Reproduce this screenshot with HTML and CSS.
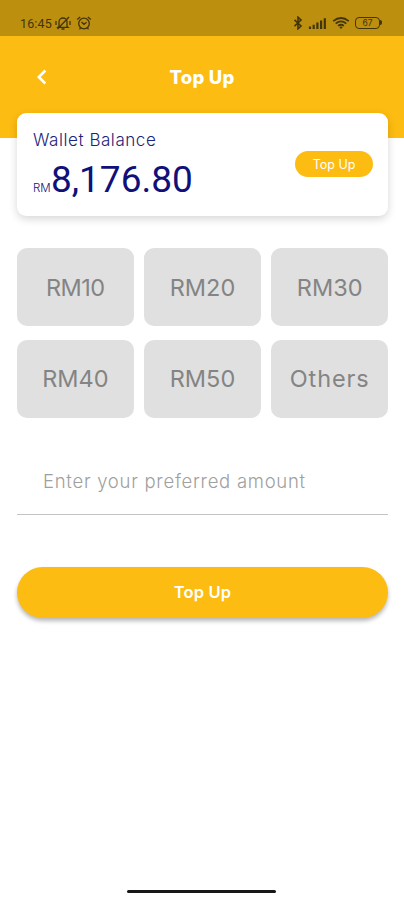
FILE: index.html
```html
<!DOCTYPE html>
<html lang="en">
<head>
<meta charset="utf-8">
<title>Top Up</title>
<link rel="stylesheet" href="styles.css">
</head>
<body>
<div class="status">
  <div class="status-left">
    <span class="time">16:45</span>
    <svg class="bell" width="16" height="16" viewBox="0 0 16 16"><path d="M4 11.500V7a4 4 0 0 1 8 0v4.500l1 .8H3zM6.500 14h3M2.500 14 14 2M1 6v4M15 6v4"/></svg>
    <svg class="alarm" width="16" height="16" viewBox="0 0 16 16"><circle cx="8" cy="8.500" r="5.300"/><path d="M1.200 4.500 4.200 2M14.800 4.500 11.800 2M5.500 7 8 9.300l2.600-2M4.500 13 3.500 14.300M11.500 13l1 1.300"/></svg>
  </div>
  <div class="status-right">
    <svg width="10" height="14" viewBox="0 0 10 14"><path class="bluetooth" d="M1.500 3.800 8 10 5 12.800V1.200L8 4 1.500 10.200"/></svg>
    <svg width="19" height="14" viewBox="0 0 19 14"><path class="bars" d="M2 10.500V13M5.700 8.800V13M9.400 6.500V13M13.100 4.500V13M16.800 2.200V13"/></svg>
    <svg width="18" height="14" viewBox="0 0 18 14"><path class="wifi" d="M1.200 5.200Q9-1.200 16.800 5.200M3.700 7.600Q9 3.200 14.300 7.600M6.100 9.900Q9 7.600 11.900 9.900"/><path class="dot" d="M7.300 11 9 13l1.700-2Q9 10 7.300 11z"/></svg>
    <div class="battery"><span class="cell">67</span><span class="tip"></span></div>
  </div>
</div>
<header class="header">
  <svg class="back" width="12" height="16" viewBox="0 0 12 16"><path d="M9.300 1.500 2.800 8l6.500 6.500"/></svg>
  <h1 class="title">Top Up</h1>
</header>
<main class="content">
  <section class="wallet">
    <div class="balance">
      <div class="label">Wallet Balance</div>
      <div class="amount"><span class="currency">RM</span><span class="value">8,176.80</span></div>
    </div>
    <button class="chip">Top Up</button>
  </section>
  <section class="options">
    <button class="option one">RM10</button>
    <button class="option">RM20</button>
    <button class="option">RM30</button>
    <button class="option">RM40</button>
    <button class="option">RM50</button>
    <button class="option others">Others</button>
  </section>
  <div class="field">Enter your preferred amount</div>
  <button class="submit">Top Up</button>
</main>
<footer class="home"><div class="home-bar"></div></footer>
</body>
</html>
```
FILE: styles.css
```css
* { box-sizing: border-box; }
body {
  margin: 0;
  height: 900px;
  display: flex;
  flex-direction: column;
  background: #fff;
  font-family: Inter, "Liberation Sans", sans-serif;
  overflow: hidden;
}
button { border: 0; padding: 0; font-family: inherit; white-space: nowrap; }
svg { display: block; fill: none; stroke: #42340b; stroke-width: 1.3; flex: none; }

.status {
  height: 36px;
  flex: none;
  padding: 10px 22px 0 20px;
  background: #bc8f0f;
  display: flex;
  justify-content: space-between;
}
.status-left, .status-right { display: flex; align-items: center; height: 26px; }
.time { font: 12.5px Roboto, sans-serif; color: #42340b; letter-spacing: .15px; width: 35px; }
.bell { margin-right: 5px; }
.status-right { gap: 5px; padding-bottom: 1px; }
.bluetooth { stroke-width: 1.6; }
.bars { stroke-width: 2.2; }
.wifi { stroke-width: 1.7; }
.dot { fill: #42340b; stroke: none; }
.battery { display: flex; align-items: center; }
.cell {
  width: 25px; height: 12px;
  border: 1.500px solid #42340b;
  border-radius: 4px;
  font: 8.5px/11px Inter, sans-serif;
  text-align: center;
  color: #42340b;
}
.tip { width: 2px; height: 5px; background: #42340b; border-radius: 0 2px 2px 0; }

.header {
  height: 102px;
  flex: none;
  background: #fdbc11;
  display: grid;
  grid-template-columns: 36px 1fr 36px;
  align-items: start;
  padding-top: 30px;
}
.back { margin: 3px 0 0 35.500px; stroke: #fff; stroke-width: 2.6; }
.title { margin: 0; text-align: center; color: #fff; font-size: 18.500px; line-height: 22px; font-weight: 800; letter-spacing: .2px; }

.content { flex: 1; padding: 0 16px 0 17px; margin-top: -25px; display: flex; flex-direction: column; }
.wallet {
  height: 103px;
  flex: none;
  border-radius: 9px;
  background: #fff;
  box-shadow: 0 3px 9px rgba(0, 0, 0, .16);
  padding: 16px 15px 0 16px;
  display: flex;
  justify-content: space-between;
}
.label { color: #1d2379; font-size: 17px; line-height: 22px; font-weight: 300; letter-spacing: .55px; white-space: nowrap; }
.amount { display: flex; align-items: baseline; color: #10107a; line-height: 44px; margin-top: 7px; }
.currency { font-size: 11.5px; font-weight: 300; width: 18px; }
.value { font-family: Roboto, sans-serif; font-size: 37px; }
.chip {
  width: 78px; height: 26px;
  margin-top: 22px;
  border-radius: 13px;
  background: #fdbc11;
  color: #fff;
  font-size: 12.5px;
}
.options {
  margin-top: 32.400px;
  display: grid;
  grid-template-columns: repeat(3, 1fr);
  grid-auto-rows: 78px;
  gap: 13.500px 10.500px;
}
.option { background: #e0e0e0; color: #848484; border-radius: 10px; font-size: 23.500px; }
.one { letter-spacing: -.5px; }
.others { letter-spacing: .9px; }
.field {
  height: 97px;
  border-bottom: 1.500px solid #c4c4c4;
  padding: 50px 0 0 26px;
  color: #a0a0a0;
  font-size: 18.500px;
  line-height: 26px;
  font-weight: 300;
  letter-spacing: .73px;
  white-space: nowrap;
}
.submit {
  margin-top: 52px;
  height: 51px;
  flex: none;
  border-radius: 26px;
  background: #fdbc11;
  color: #fff;
  font-size: 16.500px;
  font-weight: 600;
  letter-spacing: .2px;
  box-shadow: 0 3px 4px rgba(0, 0, 0, .28);
}
.home { height: 12px; flex: none; display: flex; justify-content: center; align-items: flex-start; padding-right: 2px; }
.home-bar { width: 149px; height: 3px; margin-top: 2px; border-radius: 2px; background: #171717; }
```
